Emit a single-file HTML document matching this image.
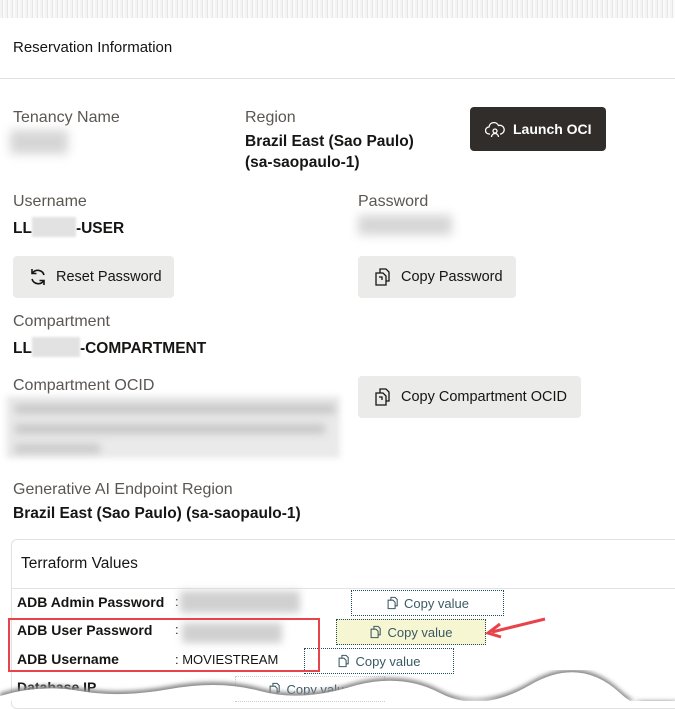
<!DOCTYPE html>
<html><head><meta charset="utf-8"><style>
*{margin:0;padding:0;box-sizing:border-box}
body{width:675px;height:701px;overflow:hidden;background:#fff;font-family:"Liberation Sans",sans-serif;position:relative;color:#161513}
.a{position:absolute;white-space:nowrap}
.lbl{font-size:16px;color:#5b5652}
.val{font-size:15.5px;font-weight:bold;color:#161513}
.blur{position:absolute;background:#e4e4e4;filter:blur(3px)}
.btn{position:absolute;background:#ebebea;border-radius:4px;font-size:14.5px;color:#161513;display:flex;align-items:center}
.btn svg{margin-right:8px}
.cv{position:absolute;border:1px dotted #1d4d5a;font-size:13px;color:#3b5a66;display:flex;align-items:center;justify-content:center;height:26px}
.cv svg{margin-right:4px}
.tl{font-size:14px;font-weight:bold;color:#161513}
</style></head><body>
<div class="a" style="left:0;top:0;width:675px;height:18px;background:repeating-linear-gradient(90deg,#f4f4f4 0 2px,#e6e6e6 2px 3px,#fafafa 3px 5px)"></div>
<div class="a" style="left:13px;top:39px;font-size:15px">Reservation Information</div>
<div class="a" style="left:0;top:78px;width:675px;height:1px;background:#e2e2e2"></div>

<div class="a lbl" style="left:13px;top:109px">Tenancy Name</div>
<div class="blur" style="left:10px;top:130px;width:58px;height:24px;background:#d6d6d6;filter:blur(5px)"></div>
<div class="a lbl" style="left:245px;top:109px">Region</div>
<div class="a val" style="left:245px;top:133px">Brazil East (Sao Paulo)</div>
<div class="a val" style="left:245px;top:154px">(sa-saopaulo-1)</div>
<div class="btn" style="left:470px;top:107px;width:136px;height:44px;background:#312d2a;color:#fff;font-weight:bold;font-size:14px;padding-left:15px">
<svg width="20" height="18" viewBox="0 0 20 18" fill="none" stroke="#fff" stroke-width="1.3"><path d="M5 14H4a3.5 3.5 0 0 1 0-7 5 5 0 0 1 9.5-1.5A3.7 3.7 0 0 1 16 14h-1"/><circle cx="10" cy="11" r="2"/><path d="M6.5 17a3.5 3.5 0 0 1 7 0"/></svg>Launch OCI</div>

<div class="a lbl" style="left:13px;top:193px">Username</div>
<div class="a val" style="left:13px;top:217px">LL<span style="display:inline-block;width:44px;height:20px;background:#e2e2e2;vertical-align:-4px;filter:blur(1px)"></span>-USER</div>
<div class="a lbl" style="left:358px;top:193px">Password</div>
<div class="blur" style="left:358px;top:215px;width:94px;height:20px;background:#d6d6d6;filter:blur(5px)"></div>
<div class="btn" style="left:13px;top:256px;width:161px;height:42px;padding-left:15px">
<svg width="20" height="20" viewBox="0 0 20 20" fill="none" stroke="#161513" stroke-width="1.6"><path d="M16 8A6.5 6.5 0 0 0 4.5 6M4 12a6.5 6.5 0 0 0 11.5 2"/><path d="M4 2v4.5h4.5M16 18v-4.5h-4.5"/></svg>Reset Password</div>
<div class="btn" style="left:358px;top:256px;width:158px;height:42px;padding-left:15px">
<svg width="20" height="20" viewBox="0 0 20 20" fill="none" stroke="#161513" stroke-width="1.3"><path d="M3 6h7l3 3v9H3z"/><path d="M7 6V2h6l3 3v9h-3"/><path d="M6 10h3v3"/></svg>Copy Password</div>

<div class="a lbl" style="left:13px;top:313px">Compartment</div>
<div class="a val" style="left:13px;top:337px">LL<span style="display:inline-block;width:48px;height:20px;background:#e2e2e2;vertical-align:-4px;filter:blur(1px)"></span>-COMPARTMENT</div>
<div class="a lbl" style="left:13px;top:377px">Compartment OCID</div>
<div class="blur" style="left:6px;top:396px;width:334px;height:62px;background:#eaeaea"></div>
<div class="blur" style="left:15px;top:404px;width:320px;height:10px;background:#c8c8c8;filter:blur(4px)"></div>
<div class="blur" style="left:15px;top:424px;width:310px;height:10px;background:#c8c8c8;filter:blur(4px)"></div>
<div class="blur" style="left:15px;top:444px;width:85px;height:9px;background:#c8c8c8;filter:blur(4px)"></div>
<div class="btn" style="left:358px;top:376px;width:223px;height:42px;padding-left:15px">
<svg width="20" height="20" viewBox="0 0 20 20" fill="none" stroke="#161513" stroke-width="1.3"><path d="M3 6h7l3 3v9H3z"/><path d="M7 6V2h6l3 3v9h-3"/><path d="M6 10h3v3"/></svg>Copy Compartment OCID</div>

<div class="a lbl" style="left:13px;top:481px">Generative AI Endpoint Region</div>
<div class="a val" style="left:13px;top:505px">Brazil East (Sao Paulo) (sa-saopaulo-1)</div>

<div class="a" style="left:11px;top:539px;width:680px;height:170px;border:1px solid #e2e2e2;border-radius:6px"></div>
<div class="a" style="left:21px;top:555px;font-size:15.5px;color:#161513">Terraform Values</div>
<div class="a" style="left:12px;top:588px;width:663px;height:1px;background:#e2e2e2"></div>

<div class="a tl" style="left:17px;top:594px">ADB Admin Password</div>
<div class="a" style="left:175px;top:594px;font-size:13px">:</div>
<div class="blur" style="left:180px;top:591px;width:120px;height:22px;background:#d0d0d0;filter:blur(4px)"></div>
<div class="cv" style="left:351px;top:590px;width:153px"><svg width="14" height="14" viewBox="0 0 20 20" fill="none" stroke="#3b5a66" stroke-width="1.5"><path d="M3 6h7l3 3v9H3z"/><path d="M7 6V2h6l3 3v9h-3"/></svg>Copy value</div>

<div class="a tl" style="left:17px;top:622px">ADB User Password</div>
<div class="a" style="left:175px;top:622px;font-size:13px">:</div>
<div class="blur" style="left:182px;top:623px;width:100px;height:20px;background:#d0d0d0;filter:blur(4px)"></div>
<div class="cv" style="left:336px;top:619px;width:150px;background:#f7f6d3"><svg width="14" height="14" viewBox="0 0 20 20" fill="none" stroke="#3b5a66" stroke-width="1.5"><path d="M3 6h7l3 3v9H3z"/><path d="M7 6V2h6l3 3v9h-3"/></svg>Copy value</div>

<div class="a tl" style="left:17px;top:651px">ADB Username</div>
<div class="a" style="left:175px;top:652px;font-size:13px">: MOVIESTREAM</div>
<div class="cv" style="left:304px;top:648px;width:150px"><svg width="14" height="14" viewBox="0 0 20 20" fill="none" stroke="#3b5a66" stroke-width="1.5"><path d="M3 6h7l3 3v9H3z"/><path d="M7 6V2h6l3 3v9h-3"/></svg>Copy value</div>

<div class="a tl" style="left:17px;top:679px">Database IP</div>
<div class="cv" style="left:235px;top:676px;width:150px;border-color:#ccc"><svg width="14" height="14" viewBox="0 0 20 20" fill="none" stroke="#3b5a66" stroke-width="1.5"><path d="M3 6h7l3 3v9H3z"/><path d="M7 6V2h6l3 3v9h-3"/></svg>Copy value</div>

<div class="a" style="left:8px;top:618px;width:312px;height:54px;border:2.5px solid #e8424a"></div>
<svg class="a" style="left:480px;top:612px" width="70" height="30"><path d="M65 7L12 20" stroke="#e8424a" stroke-width="3"/><path d="M20 12L8 21l13 4" fill="none" stroke="#e8424a" stroke-width="3"/></svg>

<svg class="a" style="left:0;top:670px" width="675" height="31"><defs><filter id="s"><feGaussianBlur stdDeviation="2"/></filter></defs>
<path d="M0 23 Q40 11 80 18 T170 16 T260 18 T350 14 T440 20 T530 12 T620 20 T700 14 V31 H0Z" fill="#888" filter="url(#s)"/>
<path d="M0 26 Q40 14 80 21 T170 19 T260 21 T350 17 T440 23 T530 15 T620 23 T700 17 V31 H0Z" fill="#fff"/></svg>
</body></html>
